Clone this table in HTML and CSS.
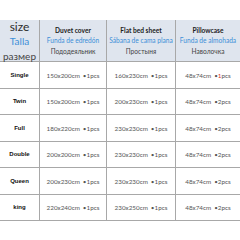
FILE: index.html
```html
<!DOCTYPE html>
<html>
<head>
<meta charset="utf-8">
<link rel="stylesheet" href="styles.css">
</head>
<body>
<div class="chart">
  <div class="cell head label">
    <div class="size">size</div>
    <div class="es big">Talla</div>
    <div class="ru big">размер</div>
  </div>
  <div class="cell head">
    <div class="en">Duvet cover</div>
    <div class="es">Funda de edredón</div>
    <div class="ru">Пододеяльник</div>
  </div>
  <div class="cell head">
    <div class="en">Flat bed sheet</div>
    <div class="es">Sábana de cama plana</div>
    <div class="ru">Простыня</div>
  </div>
  <div class="cell head last">
    <div class="en">Pillowcase</div>
    <div class="es">Funda de almohada</div>
    <div class="ru">Наволочка</div>
  </div>

  <div class="cell name">Single</div>
  <div class="cell val">150x200cm<span class="qty">•1pcs</span></div>
  <div class="cell val">160x230cm<span class="qty">•1pcs</span></div>
  <div class="cell val last">48x74cm<span class="qty">•<span class="red">1</span>pcs</span></div>

  <div class="cell name">Twin</div>
  <div class="cell val">150x200cm<span class="qty">•1pcs</span></div>
  <div class="cell val">200x230cm<span class="qty">•1pcs</span></div>
  <div class="cell val last">48x74cm<span class="qty">•2pcs</span></div>

  <div class="cell name">Full</div>
  <div class="cell val">180x220cm<span class="qty">•1pcs</span></div>
  <div class="cell val">230x230cm<span class="qty">•1pcs</span></div>
  <div class="cell val last">48x74cm<span class="qty">•2pcs</span></div>

  <div class="cell name">Double</div>
  <div class="cell val">200x200cm<span class="qty">•1pcs</span></div>
  <div class="cell val">230x230cm<span class="qty">•1pcs</span></div>
  <div class="cell val last">48x74cm<span class="qty">•2pcs</span></div>

  <div class="cell name">Queen</div>
  <div class="cell val">200x230cm<span class="qty">•1pcs</span></div>
  <div class="cell val">230x230cm<span class="qty">•1pcs</span></div>
  <div class="cell val last">48x74cm<span class="qty">•2pcs</span></div>

  <div class="cell name">king</div>
  <div class="cell val">220x240cm<span class="qty">•1pcs</span></div>
  <div class="cell val">230x250cm<span class="qty">•1pcs</span></div>
  <div class="cell val last">48x74cm<span class="qty">•2pcs</span></div>
</div>
</body>
</html>
```
FILE: styles.css
```css
html, body {
  margin: 0;
  padding: 0;
  background: #ffffff;
}
body {
  width: 240px;
  height: 240px;
  overflow: hidden;
  font-family: Lato, "Open Sans", sans-serif;
}
.chart {
  margin-top: 20px;
  display: grid;
  grid-template-columns: 40px 67px 69px 64px;
  grid-template-rows: 42px repeat(6, 26.5px);
}
.cell {
  box-sizing: border-box;
  border-right: 1px solid #a8a8a8;
  border-bottom: 1px solid #a8a8a8;
  display: flex;
  align-items: center;
  justify-content: center;
  white-space: nowrap;
}
.cell.last {
  border-right: none;
}
.head {
  background: #dfe5ee;
  flex-direction: column;
  justify-content: center;
  line-height: 10.5px;
  font-size: 6.6px;
  color: #333;
}
.head .en {
  font-weight: bold;
  color: #222;
}
.head .es {
  color: #3d8fd8;
}
.head .ru {
  color: #444;
}
.label {
  line-height: 15px;
  padding-top: 1px;
}
.label .size {
  font-size: 12px;
  color: #2a2a2a;
}
.label .big {
  font-size: 10px;
}
.name {
  font-family: "Liberation Sans", Arial, sans-serif;
  font-weight: bold;
  font-size: 6px;
  color: #111;
}
.val {
  font-size: 6.3px;
  color: #555;
  padding-top: 1px;
}
.qty {
  margin-left: 3px;
}
.red {
  color: #e0302a;
}
```
